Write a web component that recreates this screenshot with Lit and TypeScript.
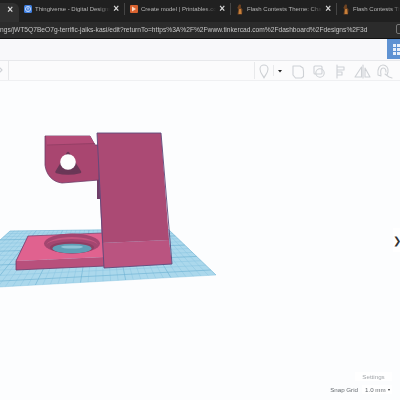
import { LitElement, html, css, svg } from "lit";
import { customElement } from "lit/decorators.js";

type P = [number, number];
const TL: P = [10, 231], TR: P = [168, 229], BR: P = [216, 275], BL: P = [-55, 290];
const mix = (a: P, b: P, t: number): P => [a[0] + (b[0] - a[0]) * t, a[1] + (b[1] - a[1]) * t];
// perspective-like spacing: rows get wider towards the viewer
const rowT = (i: number, n: number) => { const t = i / n; return t * 0.55 + t * t * 0.45; };

function gridLines() {
  const out = [];
  const cols = 36, rows = 13;
  for (let i = 0; i <= cols; i++) {
    const a = mix(TL, TR, i / cols), b = mix(BL, BR, i / cols);
    out.push(svg`<line class=${i % 6 === 0 ? "gl major" : "gl"} x1=${a[0]} y1=${a[1]} x2=${b[0]} y2=${b[1]}></line>`);
  }
  for (let j = 0; j <= rows; j++) {
    const t = rowT(j, rows);
    const a = mix(TL, BL, t), b = mix(TR, BR, t);
    out.push(svg`<line class=${j % 3 === 0 ? "gl major" : "gl"} x1=${a[0]} y1=${a[1]} x2=${b[0]} y2=${b[1]}></line>`);
  }
  return out;
}

interface Tab { title: string; icon: "thing" | "print" | "flash"; }
const TABS: Tab[] = [
  { title: "Thingiverse - Digital Designs", icon: "thing" },
  { title: "Create model | Printables.co", icon: "print" },
  { title: "Flash Contests Theme: Charg", icon: "flash" },
  { title: "Flash Contests Theme: Charg", icon: "flash" },
];

function favicon(kind: Tab["icon"]) {
  if (kind === "thing") return html`<svg class="fav" viewBox="0 0 8 8"><rect width="8" height="8" rx="1.5" fill="#3f7fe0"></rect><circle cx="4" cy="4" r="2.6" fill="none" stroke="#dfe9fb" stroke-width=".8"></circle><path d="M2.8 3h2.4M4 3v2.4" stroke="#dfe9fb" stroke-width=".7"></path></svg>`;
  if (kind === "print") return html`<svg class="fav" viewBox="0 0 8 8"><rect width="8" height="8" rx="1" fill="#d9622f"></rect><path d="M2 1.500 6 4 2 6.500z" fill="#f6d7c6"></path></svg>`;
  return html`<svg class="fav tall" viewBox="0 0 8 11"><path d="M3 .5 5 .8 4.800 3.500l1.700 2-.5 5H1.500L2.300 5 1.300 4z" fill="#6e4322"></path><path d="M3.200 5h1.800l.6 5H2.600z" fill="#c8803a"></path></svg>`;
}

@customElement("app-root")
export class AppRoot extends LitElement {
  static styles = css`
    :host { display: flex; flex-direction: column; width: 400px; height: 400px; overflow: hidden; font-family: "Liberation Sans", Arial, sans-serif; background: #fcfdfe; }
    .tabs { display: flex; height: 22px; flex: none; background: #202020; color: #b4b4b4; font-size: 6px; overflow: hidden; filter: blur(.35px); }
    .active { width: 19px; flex: none; margin-top: 3px; background: #303030; border-radius: 0 6px 0 0; display: flex; align-items: flex-start; justify-content: flex-end; padding: 2px 6px 0 0; box-sizing: border-box; }
    .x { font-size: 10px; font-weight: bold; color: #d8d8d8; line-height: 1; flex: none; }
    .tab { width: 106px; flex: none; box-sizing: border-box; display: flex; align-items: center; gap: 3px; padding: 0 5px; border-right: 1px solid #454545; height: 12px; margin-top: 3px; }
    .tab:last-child { border-right: none; width: 63px; padding-right: 0; }
    .fav { width: 8px; height: 8px; flex: none; }
    .tall { height: 11px; }
    .t { flex: 1; white-space: nowrap; overflow: hidden; min-width: 0; -webkit-mask-image: linear-gradient(90deg, #000 85%, transparent); mask-image: linear-gradient(90deg, #000 85%, transparent); }
    .url { height: 16px; flex: none; background: #2b2b2b; color: #c6c6c6; font-size: 6.65px; display: flex; align-items: center; overflow: hidden; white-space: nowrap; filter: blur(.3px); justify-content: space-between; padding-bottom: 2px; box-sizing: border-box; }
    .url .box { width: 8px; height: 8px; border: 1px solid #777; border-radius: 2px; margin-right: -6px; flex: none; }
    .shadow { height: 1px; background: #111; flex: none; }
    .head { height: 21px; flex: none; background: #f8f8fa; display: flex; justify-content: flex-end; }
    .apps { width: 13px; height: 20px; background: #5f92d2; display: grid; grid-template-columns: repeat(2, 3px); grid-auto-rows: 3px; gap: 1px; padding: 5px 0 0 6px; box-sizing: border-box; overflow: hidden; }
    .apps i { background: #e9f0fa; }
    .tools { height: 21px; flex: none; background: #fbfbfc; border-top: 1px solid #e7e8eb; border-bottom: 1px solid #eff0f2; box-sizing: border-box; }
    .tools svg { display: block; width: 400px; height: 19px; filter: blur(.4px); }
    .ic { fill: none; stroke: #ced1d5; stroke-width: 1.1; stroke-linejoin: round; stroke-linecap: round; }
    .sep { stroke: #e8e9eb; stroke-width: 1; }
    .stage { flex: 1; position: relative; min-height: 0; background: #fcfdfe; }
    .scene { display: block; width: 400px; height: 319px; filter: blur(.5px); }
    .gl { stroke: #86c3df; stroke-width: .45; }
    .major { stroke: #6fb3d4; stroke-width: .65; }
    .side { position: absolute; right: 0; top: 147px; width: 7px; height: 24px; background: #fff; display: flex; align-items: center; justify-content: center; font-size: 10px; color: #333; }
    .controls { position: absolute; right: 8px; bottom: 6px; display: flex; flex-direction: column; align-items: flex-end; gap: 4px; font-size: 6.2px; color: #7c8186; filter: blur(.25px); }
    .settings { width: 37px; height: 9px; background: #fff; display: flex; align-items: center; justify-content: center; color: #a2a6aa; }
    .snap { display: flex; align-items: center; gap: 4px; color: #666b70; }
    .dd { width: 30px; height: 9px; background: #fff; display: flex; align-items: center; justify-content: space-between; padding: 0 2px 0 3px; box-sizing: border-box; }
    .caret { width: 0; height: 0; border-left: 1.5px solid transparent; border-right: 1.5px solid transparent; border-top: 2px solid #333; }
  `;

  render() {
    return html`
      <div class="tabs">
        <div class="active"><span class="x">×</span></div>
        ${TABS.map((t, i) => html`<div class="tab">${favicon(t.icon)}<span class="t">${t.title}</span>${i < 3 ? html`<span class="x">×</span>` : ""}</div>`)}
      </div>
      <div class="url"><span>ngs/jWT5Q7BeO7g-terrific-jaiks-kasi/edit?returnTo=https%3A%2F%2Fwww.tinkercad.com%2Fdashboard%2Fdesigns%2F3d</span><span class="box"></span></div>
      <div class="shadow"></div>
      <div class="head"><div class="apps">${[...Array(6)].map(() => html`<i></i>`)}</div></div>
      <div class="tools">
        <svg viewBox="0 61 400 19">
          <path class="ic" d="M0 68l2 2-2 2"></path>
          <line class="sep" x1="8.500" y1="61" x2="8.500" y2="80"></line>
          <line class="sep" x1="254.500" y1="62" x2="254.500" y2="79"></line>
          <path class="ic" d="M264 78c-1-3-4-5-4-9a4 4 0 0 1 8 0c0 4-3 6-4 9z"></path>
          <line class="sep" x1="273.500" y1="65" x2="273.500" y2="76"></line>
          <path d="M278 70h4l-2 2.400z" fill="#222"></path>
          <path class="ic" d="M293 66h7l3 2 .5 3.500v5l-2 1.500h-6l-2.500-3z"></path>
          <rect class="ic" x="314" y="66" width="8" height="8" rx="1"></rect>
          <circle class="ic" cx="320" cy="73" r="4.200"></circle>
          <path class="ic" d="M337 65v13M337 67h7v3h-7M337 72h5v3h-5"></path>
          <path class="ic" d="M363 65v13M361.500 77h-6.500l6.500-10zM365 68l5 9h-5z"></path>
          <path class="ic" d="M378 75c-1-7 2-10 5-10s6 3 5 7l-1 3M381 75c-1-4 0-7 2-7s3 2 3 4M378 75l3 1M385 74l4 3 3 1"></path>
        </svg>
      </div>
      <div class="stage">
        <svg class="scene" viewBox="0 81 400 319">
          <polygon points="${TL} ${TR} ${BR} ${BL}" fill="#abd8ec"></polygon>
          ${gridLines()}
          <polygon points="16,261 104,257 105,266 16,270" fill="#b8507c"></polygon>
          <polygon points="28,236 103,233 104,257 16,261" fill="#e0628f"></polygon>
          <polyline points="28,236 103,233" fill="none" stroke="#7a3d68" stroke-width=".7"></polyline>
          <polyline points="28,236 16,261 16,270 105,266" fill="none" stroke="#6e3a68" stroke-width=".8"></polyline>
          <ellipse cx="72" cy="243.500" rx="28" ry="10" fill="#a34670"></ellipse>
          <path d="M46 246a26 9 0 0 1 52 0 26 7 0 0 0-52 0z" fill="#c3567f"></path>
          <ellipse cx="72" cy="247.500" rx="22" ry="6" fill="#8e3f63"></ellipse>
          <ellipse cx="72" cy="248.500" rx="19.500" ry="4.800" fill="#5f9fb6"></ellipse>
          <ellipse cx="72" cy="247" rx="11" ry="1.600" fill="#8fc3d6"></ellipse>
          <rect x="97" y="180" width="3" height="19" fill="#6f3e68"></rect>
          <path d="M45 136H90l5 9h4v35L62 183C52 182 46 174 45 165z" fill="#a94670" stroke="#6d3c68" stroke-width=".8"></path>
          <path d="M46 136H90l4 7-47 2z" fill="#b44c78"></path>
          <line x1="47" y1="145" x2="95" y2="143.500" stroke="#8c3c62" stroke-width=".7"></line>
          <path d="M68 153 56.500 172q11.500 3 23.500 0z" fill="#6a3757" stroke-linejoin="round" stroke="#6a3757" stroke-width="2.500"></path>
          <circle cx="68" cy="162" r="7.800" fill="#fdfdfd"></circle>
          <polygon points="97,133 161,133 169,240 102,243" fill="#ab4a74"></polygon>
          <polygon points="102,243 169,240 172,264 104,268" fill="#ba5480"></polygon>
          <polygon points="97,133 161,133 172,264 104,268" fill="none" stroke="#5d4a7c" stroke-width=".9"></polygon>
        </svg>
        <div class="side">❯</div>
        <div class="controls">
          <div class="settings">Settings</div>
          <div class="snap">Snap Grid <div class="dd">1.0 mm <span class="caret"></span></div></div>
        </div>
      </div>
    `;
  }
}
